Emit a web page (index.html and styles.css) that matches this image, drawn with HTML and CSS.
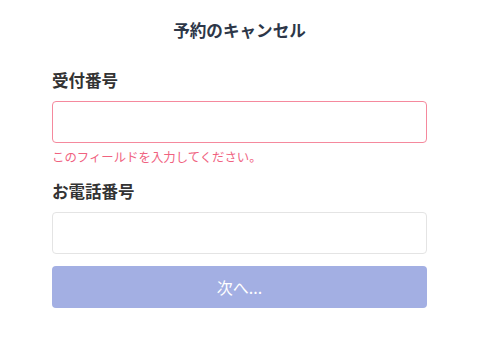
FILE: index.html
```html
<!DOCTYPE html>
<html lang="ja">
<head>
<meta charset="utf-8">
<title>予約のキャンセル</title>
<link rel="stylesheet" href="styles.css">
</head>
<body>
<main class="page">
  <h1 class="title">予約のキャンセル</h1>
  <form class="form">
    <div class="field">
      <label class="label" for="rid">受付番号</label>
      <input class="input input-error" id="rid" type="text">
      <p class="error">このフィールドを入力してください。</p>
    </div>
    <div class="field field-second">
      <label class="label" for="tel">お電話番号</label>
      <input class="input" id="tel" type="tel">
    </div>
    <button class="button" type="button" disabled>次へ...</button>
  </form>
</main>
</body>
</html>
```

FILE: styles.css
```css
html, body {
  margin: 0;
  padding: 0;
  background: #ffffff;
}

body {
  font-family: "Noto Sans CJK JP", "Noto Sans", sans-serif;
  color: #333333;
}

.page {
  width: 375px;
  margin: 0 auto;
  padding-top: 18px;
}

.title {
  margin: 0;
  font-size: 16.6px;
  line-height: 24px;
  font-weight: 700;
  text-align: center;
  color: #2d3748;
}

.form {
  display: flex;
  flex-direction: column;
  margin-top: 26px;
}

.field {
  display: flex;
  flex-direction: column;
}

.field-second {
  margin-top: 14px;
}

.label {
  font-size: 16.5px;
  line-height: 24px;
  font-weight: 700;
  color: #333333;
  margin-bottom: 9px;
}

.input {
  box-sizing: border-box;
  width: 100%;
  height: 42px;
  margin: 0;
  padding: 0 12px;
  border: 1px solid #e4e4e4;
  border-radius: 4px;
  background: #ffffff;
  font-family: inherit;
  font-size: 16px;
  outline: none;
}

.input-error {
  border-color: #f5899d;
}

.error {
  margin: 6px 0 0;
  font-size: 12.4px;
  line-height: 16px;
  color: #f0627f;
}

.button {
  box-sizing: border-box;
  width: 100%;
  height: 42px;
  margin-top: 12px;
  border: none;
  border-radius: 4px;
  background: #a3afe3;
  color: #ffffff;
  font-family: inherit;
  font-size: 16px;
  font-weight: 400;
  cursor: default;
}
```
